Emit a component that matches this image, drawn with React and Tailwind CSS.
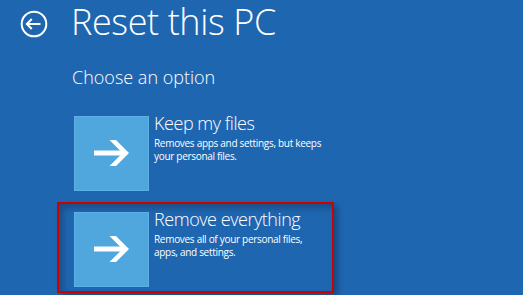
import React from "react";

function Arrow() {
  return (
    <svg width="36" height="27" viewBox="0 0 36 27">
      <polygon points="0,10.5 30,10.5 30,15.5 0,15.5" fill="#fff" />
      <polygon points="15.5,0 22,0 35,13 22,26 15.5,26 28.5,13" fill="#fff" />
    </svg>
  );
}

function BackIcon() {
  return (
    <svg width="28" height="28" viewBox="0 0 28 28" fill="none" stroke="#fff" strokeWidth="2">
      <circle cx="14" cy="14" r="12.3" />
      <line x1="6.8" y1="14" x2="20.5" y2="14" />
      <polyline points="11.8,9 6.8,14 11.8,19" strokeLinejoin="miter" />
    </svg>
  );
}

function Option({ title, lines, selected }) {
  return (
    <div
      className={
        "w-[277px] border-2 " +
        (selected
          ? "border-[#cc0000] shadow-[4px_3px_6px_rgba(0,0,0,0.28)]"
          : "border-transparent")
      }
    >
      <div
        className={
          "flex pt-[8px] pl-[15px] pb-[4px] " +
          (selected ? "shadow-[inset_4px_4px_7px_rgba(0,0,0,0.25)]" : "")
        }
      >
        <div className="w-[75px] h-[75px] bg-[#4fa7dd] border border-[#5cb0e3] flex items-center justify-center shrink-0">
          <Arrow />
        </div>
        <div className="ml-[5px] flex flex-col">
          <div className="text-[18px] leading-[14px] font-light tracking-[-0.45px] text-white whitespace-nowrap">
            {title}
          </div>
          <div className="mt-[7px] text-[10px] leading-[13px] tracking-[-0.3px] text-white whitespace-nowrap">
            {lines[0]}
            <br />
            {lines[1]}
          </div>
        </div>
      </div>
    </div>
  );
}

export default function App() {
  return (
    <div
      className="w-[523px] h-[295px] overflow-hidden bg-[#1f66b1] text-white"
      style={{ fontFamily: '"Open Sans", "Noto Sans", sans-serif' }}
    >
      <div className="flex items-start pl-[20px]">
        <div className="mt-[10px]">
          <BackIcon />
        </div>
        <div className="ml-[23px] text-[36px] leading-[44px] font-light tracking-[-0.4px] whitespace-nowrap">
          Reset this PC
        </div>
      </div>
      <div className="mt-[24px] pl-[72px] text-[18px] leading-[18px] font-light whitespace-nowrap">
        Choose an option
      </div>
      <div className="mt-[20px] ml-[57px] flex flex-col gap-[5px]">
        <Option
          title="Keep my files"
          lines={["Removes apps and settings, but keeps", "your personal files."]}
        />
        <Option
          title="Remove everything"
          lines={["Removes all of your personal files,", "apps, and settings."]}
          selected
        />
      </div>
    </div>
  );
}
